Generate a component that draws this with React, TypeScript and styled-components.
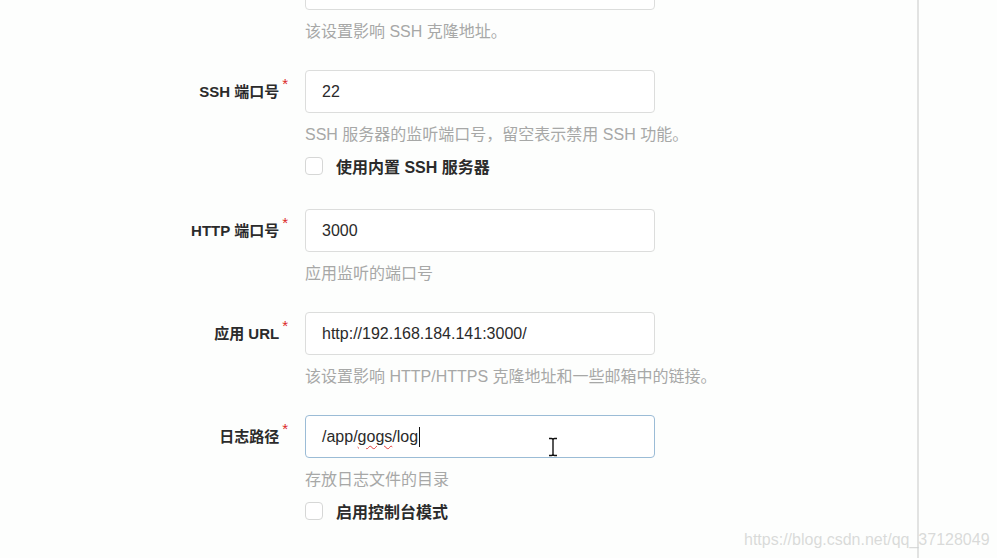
import React, { FC } from "react";
import styled, { createGlobalStyle } from "styled-components";

const GlobalStyle = createGlobalStyle`
  html, body {
    margin: 0;
    padding: 0;
    background: #fdfefd;
    overflow: hidden;
  }
  body {
    font-family: "Liberation Sans", "Noto Sans CJK SC", sans-serif;
    color: #333;
  }
`;

interface FieldProps {
  label?: string;
  value: string | JSX.Element;
  help: string;
  checkbox?: string;
  focused?: boolean;
}

const Field: FC<FieldProps> = ({ label, value, help, checkbox, focused }) => (
  <Row>
    <Label>
      {label}
      {label && <Required>*</Required>}
    </Label>
    <Control>
      <Input $focused={focused}>{value}</Input>
      <Help>{help}</Help>
      {checkbox && (
        <CheckRow>
          <Box />
          <CheckText>{checkbox}</CheckText>
        </CheckRow>
      )}
    </Control>
  </Row>
);

const LogValue = () => (
  <>
    /app/<Misspelled>gogs</Misspelled>/log<Caret />
  </>
);

const IBeam = () => (
  <BeamIcon width="10" height="20" viewBox="0 0 10 20">
    <path
      d="M1 1.5h2.5M6.5 1.5H9M3.5 1.5c1 0 1.5.5 1.5 1.5v14c0 1-.5 1.5-1.5 1.5M6.5 1.5C5.5 1.5 5 2 5 3v14c0 1 .5 1.5 1.5 1.5M1 18.5h2.5M6.5 18.5H9"
      fill="none"
      stroke="#111"
      strokeWidth="1.4"
    />
  </BeamIcon>
);

const App: FC = () => {
  return (
    <>
      <GlobalStyle />
      <Page>
        <Content>
          <Form>
            <Field value="" help="该设置影响 SSH 克隆地址。" />
            <Field
              label="SSH 端口号"
              value="22"
              help="SSH 服务器的监听端口号，留空表示禁用 SSH 功能。"
              checkbox="使用内置 SSH 服务器"
            />
            <Field label="HTTP 端口号" value="3000" help="应用监听的端口号" />
            <Field
              label="应用 URL"
              value="http://192.168.184.141:3000/"
              help="该设置影响 HTTP/HTTPS 克隆地址和一些邮箱中的链接。"
            />
            <Field
              label="日志路径"
              value={<LogValue />}
              help="存放日志文件的目录"
              checkbox="启用控制台模式"
              focused
            />
          </Form>
          <IBeam />
        </Content>
        <Side />
        <Watermark>https://blog.csdn.net/qq_37128049</Watermark>
      </Page>
    </>
  );
};

export default App;

const Page = styled.div`
  position: relative;
  display: flex;
  width: 997px;
  height: 558px;
  overflow: hidden;
`;

const Content = styled.div`
  position: relative;
  width: 917px;
  border-right: 2px solid #e2e3e2;
`;

const Side = styled.div`
  flex: 1;
`;

const Form = styled.div`
  display: flex;
  flex-direction: column;
  gap: 28px;
  margin-top: -33px;
`;

const Row = styled.div`
  display: grid;
  grid-template-columns: 288px 350px;
  column-gap: 17px;
  align-items: start;
`;

const Label = styled.div`
  text-align: right;
  line-height: 43px;
  height: 43px;
  font-size: 15px;
  font-weight: 700;
  color: #2b2b2b;
  white-space: nowrap;
`;

const Required = styled.span`
  display: inline-block;
  vertical-align: top;
  margin: -8px 0 0 3px;
  color: #db2828;
  font-size: 15px;
  font-weight: 400;
`;

const Control = styled.div`
  display: flex;
  flex-direction: column;
`;

const Input = styled.div<{ $focused?: boolean }>`
  box-sizing: border-box;
  height: 43px;
  padding: 0 16px;
  display: flex;
  align-items: center;
  border: 1px solid ${(p) => (p.$focused ? "#9bbcd6" : "#dcdddc")};
  border-radius: 4px;
  background: #fff;
  font-size: 16px;
  color: #2a2a2a;
  white-space: nowrap;
`;

const Misspelled = styled.span`
  text-decoration: underline wavy #e23b3b;
  text-decoration-thickness: 1px;
  text-underline-offset: 3px;
`;

const Caret = styled.span`
  display: inline-block;
  width: 1px;
  height: 20px;
  margin-left: 1px;
  background: #111;
`;

const Help = styled.div`
  margin-top: 12px;
  line-height: 20px;
  font-size: 16px;
  color: #a7a8a7;
  white-space: nowrap;
`;

const CheckRow = styled.div`
  display: flex;
  align-items: center;
  gap: 13px;
  margin-top: 8px;
  height: 26px;
  padding-bottom: 2px;
`;

const Box = styled.span`
  box-sizing: border-box;
  width: 18px;
  height: 18px;
  border: 1px solid #d6d7d6;
  border-radius: 4px;
  background: #fff;
`;

const CheckText = styled.span`
  font-size: 16px;
  font-weight: 700;
  color: #2b2b2b;
`;

const BeamIcon = styled.svg`
  position: absolute;
  left: 548px;
  top: 437px;
`;

const Watermark = styled.div`
  position: absolute;
  left: 744px;
  top: 531px;
  font-size: 16px;
  color: rgba(205, 207, 205, 0.75);
  white-space: nowrap;
`;
